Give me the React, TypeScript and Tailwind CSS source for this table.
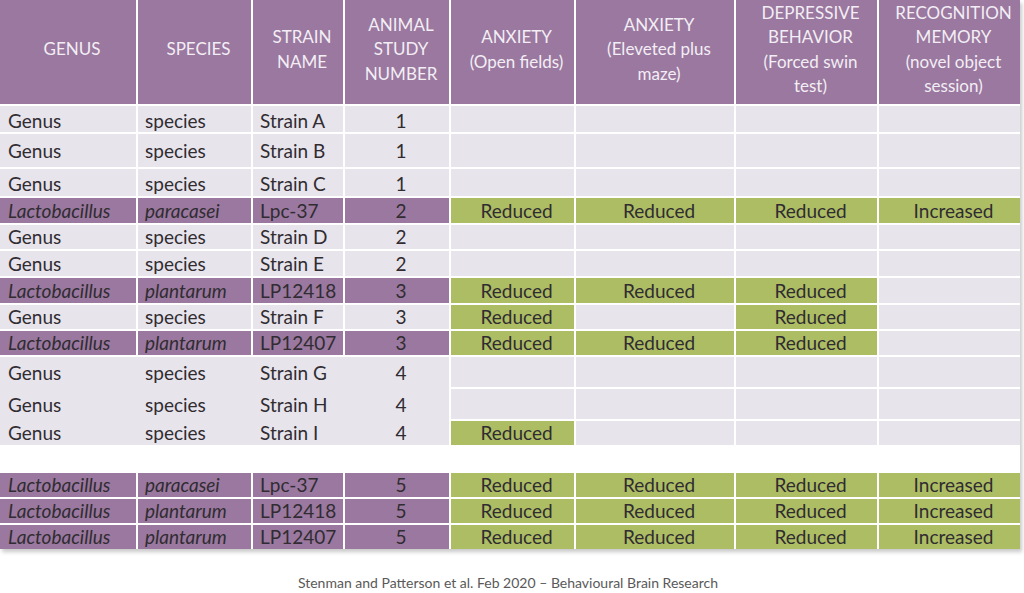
import React from 'react';

const cols = 'grid grid-cols-[136px_113px_90px_104px_123px_158px_141px_141px] grid-rows-1 gap-x-[2px]';

type Row = {
  genus: string;
  species: string;
  strain: string;
  num: string;
  results: string[];
  lacto?: boolean;
  h: string;
};

const topRows: Row[] = [
  { genus: 'Genus', species: 'species', strain: 'Strain A', num: '1', results: ['', '', '', ''], h: 'h-[26px] pt-[2px]' },
  { genus: 'Genus', species: 'species', strain: 'Strain B', num: '1', results: ['', '', '', ''], h: 'h-[33px]' },
  { genus: 'Genus', species: 'species', strain: 'Strain C', num: '1', results: ['', '', '', ''], h: 'h-[27px] pt-[2px]' },
  { genus: 'Lactobacillus', species: 'paracasei', strain: 'Lpc-37', num: '2', results: ['Reduced', 'Reduced', 'Reduced', 'Increased'], lacto: true, h: 'h-[25px]' },
  { genus: 'Genus', species: 'species', strain: 'Strain D', num: '2', results: ['', '', '', ''], h: 'h-[24px]' },
  { genus: 'Genus', species: 'species', strain: 'Strain E', num: '2', results: ['', '', '', ''], h: 'h-[25px]' },
  { genus: 'Lactobacillus', species: 'plantarum', strain: 'LP12418', num: '3', results: ['Reduced', 'Reduced', 'Reduced', ''], lacto: true, h: 'h-[25px]' },
  { genus: 'Genus', species: 'species', strain: 'Strain F', num: '3', results: ['Reduced', '', 'Reduced', ''], h: 'h-[24px]' },
  { genus: 'Lactobacillus', species: 'plantarum', strain: 'LP12407', num: '3', results: ['Reduced', 'Reduced', 'Reduced', ''], lacto: true, h: 'h-[24px]' },
];

const bottomRows: Row[] = [
  { genus: 'Lactobacillus', species: 'paracasei', strain: 'Lpc-37', num: '5', results: ['Reduced', 'Reduced', 'Reduced', 'Increased'], lacto: true, h: 'h-[24px]' },
  { genus: 'Lactobacillus', species: 'plantarum', strain: 'LP12418', num: '5', results: ['Reduced', 'Reduced', 'Reduced', 'Increased'], lacto: true, h: 'h-[24px]' },
  { genus: 'Lactobacillus', species: 'plantarum', strain: 'LP12407', num: '5', results: ['Reduced', 'Reduced', 'Reduced', 'Increased'], lacto: true, h: 'h-[24px]' },
];

const groupFour = [
  { strain: 'Strain G', results: ['', '', '', ''] },
  { strain: 'Strain H', results: ['', '', '', ''] },
  { strain: 'Strain I', results: ['Reduced', '', '', ''] },
];

const headers = [
  ['GENUS'],
  ['SPECIES'],
  ['STRAIN', 'NAME'],
  ['ANIMAL', 'STUDY', 'NUMBER'],
  ['ANXIETY', '(Open fields)'],
  ['ANXIETY', '(Eleveted plus', 'maze)'],
  ['DEPRESSIVE', 'BEHAVIOR', '(Forced swin', 'test)'],
  ['RECOGNITION', 'MEMORY', '(novel object', 'session)'],
];

function ResultCell({ value }: { value: string }) {
  return (
    <div className={`flex items-center justify-center pl-2 overflow-hidden ${value ? 'bg-[#adbd64]' : 'bg-[#e8e4ec]'}`}>
      {value}
    </div>
  );
}

function DataRow({ row }: { row: Row }) {
  const left = row.lacto ? 'bg-[#9a789f]' : 'bg-[#e8e4ec]';
  return (
    <div className={`${cols} ${row.h.split(' ')[0]}`}>
      {[row.genus, row.species, row.strain].map((t, i) => (
        <div key={i} className={`flex items-center overflow-hidden ${i === 0 ? 'pl-[8px]' : 'pl-[7px]'} ${left} ${row.lacto && i < 2 ? 'italic' : ''}`}>
          <span className={row.h.includes('pt-') ? 'pt-[3px]' : ''}>{t}</span>
        </div>
      ))}
      <div className={`flex items-center justify-center pl-2 overflow-hidden ${left}`}>
        <span className={row.h.includes('pt-') ? 'pt-[3px]' : ''}>{row.num}</span>
      </div>
      {row.results.map((r, i) => (
        <ResultCell key={i} value={r} />
      ))}
    </div>
  );
}

export default function App() {
  return (
    <div className="w-[1024px] h-[593px] bg-white overflow-hidden text-[#302c31]" style={{ fontFamily: 'Lato, "Open Sans", sans-serif' }}>
      <div className="w-[1020px] bg-white flex flex-col gap-y-[2px] text-[19px] leading-[20px] shadow-[2px_3px_4px_rgba(0,0,0,0.22)]">
        {/* header */}
        <div className={`${cols} h-[104px]`}>
          {headers.map((lines, i) => (
            <div key={i} className="flex flex-col items-center justify-center pb-[5px] pl-2 bg-[#9a789f] text-[#f3eef5] text-center text-[17px] leading-[24.5px]">
              {lines.map(l => (
                <span key={l}>{l}</span>
              ))}
            </div>
          ))}
        </div>

        {topRows.map((row, i) => (
          <DataRow key={i} row={row} />
        ))}

        {/* study 4: strain columns merged */}
        <div className="grid grid-cols-[449px_123px_158px_141px_141px] grid-rows-[30px_30px_24px] gap-[2px] h-[88px]">
          <div className="row-span-3 bg-[#e8e4ec] grid grid-cols-[138px_115px_92px_104px] grid-rows-[32px_32px_24px]">
            {groupFour.map(g => (
              <React.Fragment key={g.strain}>
                <div className="flex items-center pl-[8px]">Genus</div>
                <div className="flex items-center pl-[7px]">species</div>
                <div className="flex items-center pl-[7px]">{g.strain}</div>
                <div className="flex items-center justify-center pl-2">4</div>
              </React.Fragment>
            ))}
          </div>
          {groupFour.map(g => g.results.map((r, i) => <ResultCell key={g.strain + i} value={r} />))}
        </div>

        <div className="h-[24px]" />

        {bottomRows.map((row, i) => (
          <DataRow key={i} row={row} />
        ))}
      </div>

      <p className="mt-[25px] text-center text-[14px] leading-[18px] text-[#595959] pr-[8px]">
        Stenman and Patterson et al. Feb 2020 – Behavioural Brain Research
      </p>
    </div>
  );
}
